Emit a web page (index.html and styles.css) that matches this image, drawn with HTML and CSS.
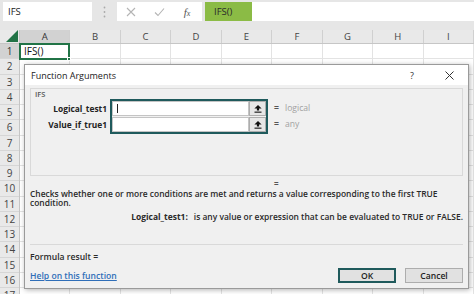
FILE: index.html
```html
<!DOCTYPE html>
<html>
<head>
<meta charset="utf-8">
<link rel="stylesheet" href="styles.css">
</head>
<body>
<div class="app">
  <div class="toolbar">
    <div class="namebox">IFS</div>
    <div class="grip">
      <svg width="3" height="12" viewBox="0 0 3 12"><circle cx="1.5" cy="1.5" r="0.9" fill="#a9a9a9"/><circle cx="1.5" cy="6" r="0.9" fill="#a9a9a9"/><circle cx="1.5" cy="10.5" r="0.9" fill="#a9a9a9"/></svg>
    </div>
    <div class="fxbox">
      <span class="slot"><svg width="10" height="10" viewBox="0 0 10 10"><path d="M1 1 L9 9 M9 1 L1 9" stroke="#b4b4b4" stroke-width="1.1" fill="none"/></svg></span>
      <span class="slot"><svg width="11" height="10" viewBox="0 0 11 10"><path d="M1 5.5 L4 8.5 L10 1.5" stroke="#b4b4b4" stroke-width="1.1" fill="none"/></svg></span>
      <span class="slot fx">f<span class="fxx">x</span></span>
    </div>
    <div class="formula"><span class="hl">IFS()</span></div>
  </div>

  <div class="sheet">
    <div class="corner"><svg width="12" height="12" viewBox="0 0 12 12"><polygon points="12,0 12,12 0,12" fill="#217346"/></svg></div>
    <div class="colheads">
      <div class="ch sel">A</div><div class="ch">B</div><div class="ch">C</div><div class="ch">D</div><div class="ch">E</div><div class="ch">F</div><div class="ch">G</div><div class="ch">H</div><div class="ch">I</div>
    </div>
    <div class="rowheads">
      <div class="rh sel">1</div><div class="rh">2</div><div class="rh">3</div><div class="rh">4</div><div class="rh">5</div><div class="rh">6</div><div class="rh">7</div><div class="rh">8</div><div class="rh">9</div><div class="rh">10</div><div class="rh">11</div><div class="rh">12</div><div class="rh">13</div><div class="rh">14</div><div class="rh">15</div><div class="rh">16</div><div class="rh">17</div>
    </div>
    <div class="cells">
      <div class="a1">IFS()<span class="handle"></span></div>
    </div>
  </div>

  <div class="dialog">
    <div class="titlebar">
      <span class="dtitle">Function Arguments</span>
      <span class="qmark">?</span>
      <span class="close"><svg width="9" height="9" viewBox="0 0 9 9"><path d="M0.5 0.5 L8.5 8.5 M8.5 0.5 L0.5 8.5" stroke="#333" stroke-width="1" fill="none"/></svg></span>
    </div>
    <div class="dbody">
      <div class="group">
        <div class="gtitle">IFS</div>
        <div class="args">
          <div class="labels">
            <div class="lbl">Logical_test1</div>
            <div class="lbl">Value_if_true1</div>
          </div>
          <div class="frame">
            <div class="inp"><div class="field"><span class="caret"></span></div><div class="cbtn"><svg width="8" height="8" viewBox="0 0 8 8"><path d="M4 0 L7.6 3.6 H5.1 V5.6 H2.9 V3.6 H0.4 Z" fill="#111"/><rect x="0.5" y="6.6" width="7" height="1.1" fill="#111"/></svg></div></div>
            <div class="inp"><div class="field"></div><div class="cbtn"><svg width="8" height="8" viewBox="0 0 8 8"><path d="M4 0 L7.6 3.6 H5.1 V5.6 H2.9 V3.6 H0.4 Z" fill="#111"/><rect x="0.5" y="6.6" width="7" height="1.1" fill="#111"/></svg></div></div>
          </div>
          <div class="results">
            <div class="res"><span class="eq">=</span><span class="rv">logical</span></div>
            <div class="res"><span class="eq">=</span><span class="rv">any</span></div>
          </div>
        </div>
      </div>
      <div class="eqline">=</div>
      <div class="desc">Checks whether one or more conditions are met and returns a value corresponding to the first TRUE condition.</div>
      <div class="argdesc"><span class="adl">Logical_test1:</span><span class="adt">is any value or expression that can be evaluated to TRUE or FALSE.</span></div>
      <div class="sep"></div>
      <div class="result">Formula result =</div>
      <div class="bottom">
        <a class="helplink" href="#">Help on this function</a>
        <div class="btns">
          <button class="btn ok">OK</button>
          <button class="btn">Cancel</button>
        </div>
      </div>
    </div>
  </div>
</div>
</body>
</html>
```

FILE: styles.css
```css
* { box-sizing: border-box; }
body { margin: 0; font-family: "Open Sans", "Noto Sans", sans-serif; }
.app { position: relative; width: 474px; height: 294px; overflow: hidden; background: #fff; }

/* toolbar */
.toolbar { height: 30px; background: #e6e6e6; display: flex; align-items: flex-start; padding-top: 2px; }
.namebox { margin-left: 3px; width: 89px; height: 19px; background: #fff; font-size: 9.5px; line-height: 19px; padding-left: 5px; color: #222; }
.grip { width: 25px; height: 19px; display: flex; align-items: center; justify-content: center; }
.fxbox { width: 85px; height: 19px; background: #fff; display: flex; align-items: center; }
.slot { width: 28px; height: 19px; display: flex; align-items: center; justify-content: center; }
.fx { font-family: "Liberation Serif", serif; font-style: italic; font-size: 11px; color: #555; }
.fxx { font-size: 8px; position: relative; top: 2px; }
.formula { margin-left: 3px; flex: 1; height: 19px; background: #fff; display: flex; }
.hl { width: 47px; background: #8bbb45; font-size: 9.5px; line-height: 19px; padding-left: 9px; color: #2a2a2a; }

/* sheet */
.sheet { display: grid; grid-template-columns: 20px 1fr; grid-template-rows: 14px 1fr; height: 264px; }
.corner { background: #e9e9e9; border-right: 1px solid #c6c6c6; border-bottom: 1px solid #c6c6c6; display: flex; align-items: flex-end; justify-content: flex-end; padding: 0 1px 1px 0; }
.colheads { display: grid; grid-template-columns: repeat(9, 50.44px); background: #e9e9e9; border-bottom: 1px solid #c6c6c6; }
.ch { font-size: 9.5px; line-height: 13px; text-align: center; color: #444; border-right: 1px solid #d0d0d0; }
.ch.sel { background: #d2d2d2; color: #333; }
.rowheads { display: grid; grid-template-rows: repeat(17, 15.25px); background: #e9e9e9; border-right: 1px solid #c6c6c6; align-content: start; }
.rh { font-size: 10px; line-height: 14.25px; text-align: center; color: #444; border-bottom: 1px solid #d6d6d6; }
.rh.sel { background: #d2d2d2; color: #333; }
.cells {
  display: grid; grid-template-columns: repeat(9, 50.44px); grid-template-rows: repeat(17, 15.25px); align-content: start;
  background:
    repeating-linear-gradient(to right, transparent 0 49.44px, #e3e3e3 49.44px 50.44px),
    repeating-linear-gradient(to bottom, transparent 0 14.25px, #e3e3e3 14.25px 15.25px);
}
.a1 { grid-column: 1; grid-row: 1; position: relative; border: 2px solid #217346; margin: -1px 0 -1px -1px; font-size: 10px; line-height: 12px; padding-left: 3px; color: #111; }
.handle { position: absolute; right: -3px; bottom: -3px; width: 4px; height: 4px; background: #217346; border: 1px solid #fff; }

/* dialog */
.dialog { position: absolute; left: 24px; top: 64px; width: 445px; height: 225px; border: 1px solid #9a9a9a; background: #f0f0f0; box-shadow: 1px 1px 5px rgba(0,0,0,0.3); display: flex; flex-direction: column; }
.titlebar { height: 20px; background: #fff; display: flex; align-items: center; padding-left: 6px; }
.dtitle { flex: 1; font-size: 9px; color: #222; }
.qmark { width: 14px; text-align: center; font-size: 9px; color: #333; margin-right: 19px; }
.close { width: 22px; display: flex; justify-content: center; margin-right: 8px; }
.dbody { flex: 1; padding: 3px 5px 0 5px; display: flex; flex-direction: column; font-size: 8.6px; font-weight: 600; color: #2a2a2a; }
.group { height: 88px; border: 1px solid #d9d9d9; }
.gtitle { height: 10px; line-height: 10px; font-size: 7.5px; font-weight: 600; color: #555; padding-left: 4px; }
.args { display: flex; }
.labels { width: 76px; padding-top: 2px; }
.lbl { height: 16px; line-height: 15px; text-align: right; font-weight: 700; font-size: 8.4px; color: #222; white-space: nowrap; }
.frame { margin-left: 3px; width: 158px; border: 2px solid #1f5a5c; }
.inp { height: 15px; display: flex; }
.inp + .inp { margin-top: 1px; }
.field { flex: 1; background: #fff; border: 1px solid #c4c4c4; display: flex; align-items: center; padding-left: 4px; }
.caret { width: 1px; height: 9px; background: #222; }
.cbtn { width: 17px; background: #e6e6e6; border: 1px solid #adadad; display: flex; align-items: center; justify-content: center; }
.results { margin-left: 6px; padding-top: 2px; }
.res { height: 16px; line-height: 15px; display: flex; }
.eq { width: 11px; font-weight: 700; color: #555; }
.rv { color: #a2a2a2; font-weight: 400; }
.eqline { margin-top: 4px; margin-left: 244px; width: 10px; height: 9px; line-height: 8px; font-size: 8px; font-weight: 700; color: #555; }
.desc { line-height: 9px; font-size: 8.45px; }
.argdesc { margin-top: 5px; display: flex; line-height: 9px; font-size: 8.45px; white-space: nowrap; }
.adl { width: 160px; text-align: right; font-weight: 700; }
.adt { margin-left: 6px; }
.sep { margin-top: 23px; height: 1px; background: #d9d9d9; }
.result { margin-top: 8px; line-height: 9px; }
.bottom { margin-top: 6px; display: flex; align-items: center; justify-content: space-between; }
.helplink { color: #2f6eb8; text-decoration: underline; }
.btns { display: flex; gap: 9px; }
.btn { width: 58px; height: 15px; padding: 0; background: #e1e1e1; border: 1px solid #adadad; font-family: "Open Sans", "Noto Sans", sans-serif; font-size: 8.6px; font-weight: 600; color: #222; }
.btn.ok { border: 2px solid #1f5a5c; }
```
